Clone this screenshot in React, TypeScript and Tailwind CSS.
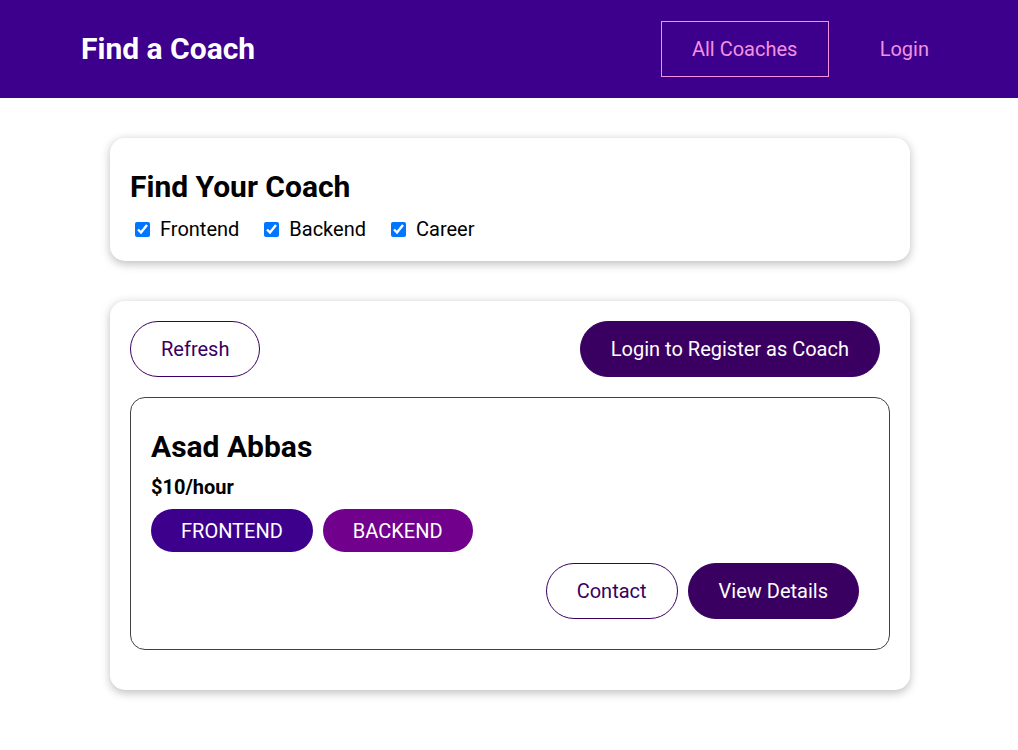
import { useState } from "react";

const areas = [
  { id: "frontend", label: "Frontend" },
  { id: "backend", label: "Backend" },
  { id: "career", label: "Career" },
];

function Header() {
  return (
    <header className="flex h-[98px] w-full items-center justify-between pb-[1px] bg-[#3d008d] pl-[81px] pr-[57px]">
      <h1 className="text-[30px] leading-[35px] font-bold text-white">
        <a href="#">Find a Coach</a>
      </h1>
      <ul className="flex items-center gap-[19px]">
        <li>
          <a href="#" className="flex h-[56px] w-[168px] items-center justify-center border border-[#f391e3] text-[20px] text-[#f391e3]">
            All Coaches
          </a>
        </li>
        <li>
          <a href="#" className="flex h-[56px] items-center border border-transparent px-[31px] text-[20px] text-[#f391e3]">
            Login
          </a>
        </li>
      </ul>
    </header>
  );
}

function CoachFilter() {
  const [checked, setChecked] = useState<Record<string, boolean>>({ frontend: true, backend: true, career: true });

  return (
    <section className="mt-[40px] w-[800px] rounded-[15px] bg-white p-[20px] shadow-[0_2.5px_10px_rgba(0,0,0,0.26)]">
      <h2 className="mt-[11px] text-[30px] leading-[35px] font-bold text-black">Find Your Coach</h2>
      <div className="mt-[13px] flex h-[24px] items-center">
        {areas.map((area) => (
          <span key={area.id} className="mr-[20px] flex items-center">
            <input
              id={area.id}
              type="checkbox"
              checked={checked[area.id]}
              onChange={() => setChecked({ ...checked, [area.id]: !checked[area.id] })}
              className="ml-[5px] h-[15px] w-[15px] accent-[#0075ff]"
            />
            <label htmlFor={area.id} className="ml-[10px] text-[20px] leading-[24px] text-black">
              {area.label}
            </label>
          </span>
        ))}
      </div>
    </section>
  );
}

function CoachItem() {
  return (
    <li className="my-[20px] rounded-[15px] border border-[#424242] px-[20px] pt-[20px] pb-[30px]">
      <h3 className="mt-[11px] text-[30px] leading-[35px] font-bold text-black">Asad Abbas</h3>
      <h4 className="mt-[11px] text-[20px] leading-[24px] font-bold text-black">$10/hour</h4>
      <div className="mt-[10px] flex">
        <span className="mr-[10px] flex h-[43px] items-center rounded-full bg-[#3d008d] px-[30px] text-[20px] text-white uppercase">
          frontend
        </span>
        <span className="mr-[10px] flex h-[43px] items-center rounded-full bg-[#71008d] px-[30px] text-[20px] text-white uppercase">
          backend
        </span>
      </div>
      <div className="mt-[11px] flex justify-end">
        <a href="#" className="mr-[10px] flex h-[56px] items-center rounded-full border border-[#3a0061] px-[30px] text-[20px] text-[#3a0061]">
          Contact
        </a>
        <a href="#" className="mr-[10px] flex h-[56px] items-center rounded-full border border-[#3a0061] bg-[#3a0061] px-[30px] text-[20px] text-white">
          View Details
        </a>
      </div>
    </li>
  );
}

function CoachList() {
  return (
    <section className="mt-[40px] mb-[40px] w-[800px] rounded-[15px] bg-white p-[20px] shadow-[0_2.5px_10px_rgba(0,0,0,0.26)]">
      <div className="flex items-center justify-between">
        <button className="flex h-[56px] items-center rounded-full border border-[#3a0061] px-[30px] text-[20px] text-[#3a0061]">
          Refresh
        </button>
        <a href="#" className="mr-[10px] flex h-[56px] items-center rounded-full border border-[#3a0061] bg-[#3a0061] px-[30px] text-[20px] text-white">
          Login to Register as Coach
        </a>
      </div>
      <ul>
        <CoachItem />
      </ul>
    </section>
  );
}

export default function App() {
  return (
    <div className="min-h-[750px] bg-white font-['Roboto',sans-serif]">
      <Header />
      <main className="flex flex-col items-center pl-[2px]">
        <CoachFilter />
        <CoachList />
      </main>
    </div>
  );
}
